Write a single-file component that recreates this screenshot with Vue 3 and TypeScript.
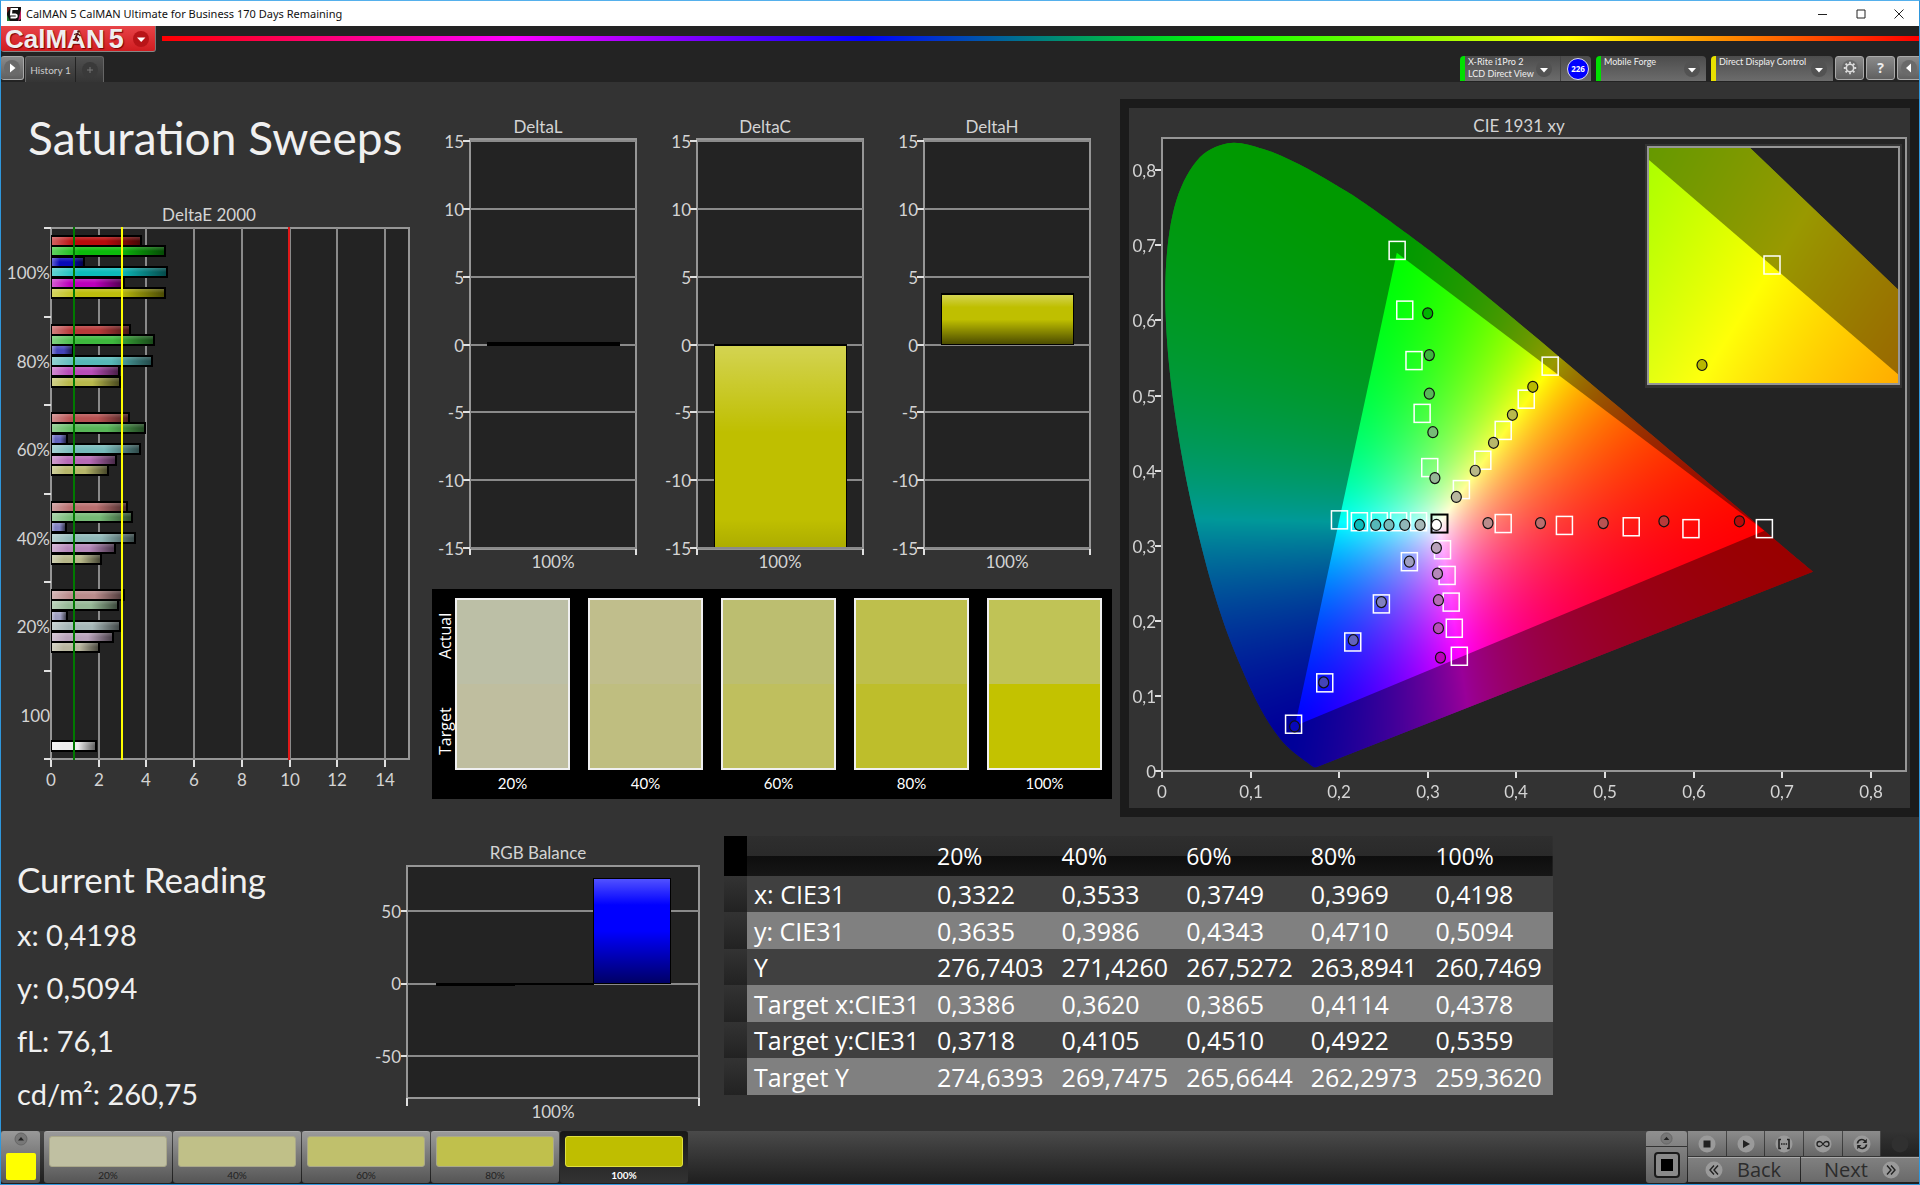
<script setup lang="ts">
import { onMounted, ref } from 'vue'

type Point = [number, number]

interface Marker {
  x: number
  y: number
  fill?: string
}

const levels = ['20%', '40%', '60%', '80%', '100%']

/* ---------- DeltaE 2000 ---------- */
const deStep = 23.87
const deLeft = 50
const deTop = 23
const deBand = 88.5
const deGroups = [
  { label: '100%', values: [3.83, 4.83, 1.42, 4.89, 3.08, 4.83], colors: ['#b80c0c', '#0cba0c', '#0808b8', '#0cbaba', '#bc00bc', '#bcbc0c'] },
  { label: '80%', values: [3.36, 4.37, 0.98, 4.29, 2.9, 2.94], colors: ['#b83a3a', '#3eb83e', '#4444b8', '#56b8b8', '#b84cb8', '#b8b84c'] },
  { label: '60%', values: [3.29, 3.96, 0.73, 3.76, 2.77, 2.44], colors: ['#b85252', '#58b658', '#6262bc', '#76baba', '#b66ab6', '#b6b66a'] },
  { label: '40%', values: [3.23, 3.44, 0.68, 3.58, 2.73, 2.13], colors: ['#b86e6e', '#76ba76', '#8080c0', '#90b8b8', '#b688ba', '#b6b688'] },
  { label: '20%', values: [3.09, 2.83, 0.73, 2.95, 2.65, 2.06], colors: ['#ba8c8c', '#96b896', '#9e9ec0', '#a6b8b8', '#b8a2ba', '#b8b69e'] },
]
const deBars = deGroups.flatMap((g, gi) =>
  g.values.map((v, i) => ({
    y: Math.round(deTop + gi * deBand + 7 + i * 10.4),
    w: Math.round(v * deStep),
    color: g.colors[i],
  })),
)
deBars.push({ y: 535, w: 46, color: '#ececec' })
const deLabels = [...deGroups.map((g) => g.label), '100']
const deTicks = [0, 2, 4, 6, 8, 10, 12, 14]
const deX = (v: number) => Math.round(deLeft + v * deStep)

/* ---------- DeltaL / DeltaC / DeltaH ---------- */
const deltaTicks = [15, 10, 5, 0, -5, -10, -15]
const deltaY = (v: number) => Math.round(229.5 - v * 13.55)
const deltaCharts = [
  { name: 'DeltaL', top: 227, height: 4 },
  { name: 'DeltaC', top: 229, height: 350 },
  { name: 'DeltaH', top: 178, height: 52 },
]

/* ---------- Swatches ---------- */
const swatches = [
  { actual: '#bcbfa6', target: '#bfbe9f' },
  { actual: '#c0be8c', target: '#bfbe80' },
  { actual: '#bcbe70', target: '#bfbf5e' },
  { actual: '#bebf4c', target: '#bebe2b' },
  { actual: '#c0c356', target: '#c3c200' },
]
const steps = ['#c0c0a2', '#c0c088', '#c0c06c', '#c0c04c', '#bfbe00']

/* ---------- Table ---------- */
const rows = [
  { name: 'x: CIE31', values: ['0,3322', '0,3533', '0,3749', '0,3969', '0,4198'] },
  { name: 'y: CIE31', values: ['0,3635', '0,3986', '0,4343', '0,4710', '0,5094'] },
  { name: 'Y', values: ['276,7403', '271,4260', '267,5272', '263,8941', '260,7469'] },
  { name: 'Target x:CIE31', values: ['0,3386', '0,3620', '0,3865', '0,4114', '0,4378'] },
  { name: 'Target y:CIE31', values: ['0,3718', '0,4105', '0,4510', '0,4922', '0,5359'] },
  { name: 'Target Y', values: ['274,6393', '269,7475', '265,6644', '262,2973', '259,3620'] },
]

/* ---------- CIE 1931 ---------- */
const cieX = (v: number) => 33 + v * 886
const cieY = (v: number) => 663 - v * 751
const xTicks = ['0', '0,1', '0,2', '0,3', '0,4', '0,5', '0,6', '0,7', '0,8']

const locus: Point[] = [
  [0.1741, 0.005], [0.1714, 0.0051], [0.1689, 0.0069], [0.1644, 0.0109], [0.1566, 0.0177],
  [0.144, 0.0297], [0.1355, 0.0399], [0.1241, 0.0578], [0.1096, 0.0868], [0.0913, 0.1327],
  [0.0687, 0.2007], [0.0454, 0.295], [0.0235, 0.4127], [0.0082, 0.5384], [0.0039, 0.6548],
  [0.0139, 0.7502], [0.0389, 0.812], [0.0743, 0.8358], [0.1142, 0.8282], [0.1547, 0.8079],
  [0.1929, 0.7826], [0.2296, 0.7553], [0.3016, 0.6933], [0.3731, 0.6255], [0.4441, 0.5557],
  [0.5125, 0.4876], [0.5752, 0.4252], [0.627, 0.3735], [0.6658, 0.3345], [0.6915, 0.3083],
  [0.719, 0.2809], [0.7347, 0.2653],
]
const gamut: Point[] = [[0.68, 0.32], [0.265, 0.69], [0.15, 0.06]]

const targets: Marker[] = [
  [0.2654, 0.6932], [0.274, 0.6137], [0.2844, 0.5465], [0.2936, 0.4762], [0.3022, 0.404],
  [0.4381, 0.5391], [0.4111, 0.4951], [0.3851, 0.4535], [0.3621, 0.4138], [0.3379, 0.3747],
  [0.6799, 0.3227], [0.597, 0.3227], [0.5296, 0.3252], [0.4542, 0.327], [0.3851, 0.3295],
  [0.2003, 0.3344], [0.2228, 0.3319], [0.2453, 0.3319], [0.2671, 0.3319], [0.2896, 0.3319],
  [0.3166, 0.2946], [0.3218, 0.2604], [0.3264, 0.2249], [0.3299, 0.1901], [0.3356, 0.1528],
  [0.2792, 0.2787], [0.2476, 0.2225], [0.2153, 0.1718], [0.1837, 0.1174], [0.1485, 0.0623],
].map(([x, y]) => ({ x, y }))

const series: { color: string[]; points: Point[] }[] = [
  { color: ['#00b400', '#3eb43e', '#58b658', '#76ba76', '#96b896'], points: [[0.2999, 0.6094], [0.3017, 0.5538], [0.3017, 0.5024], [0.3057, 0.4511], [0.308, 0.39]] },
  { color: ['#b8b800', '#b8b84c', '#b8b86a', '#b8b888', '#b8b69e'], points: [[0.4185, 0.5116], [0.3955, 0.4743], [0.3742, 0.437], [0.3535, 0.3998], [0.3322, 0.3649]] },
  { color: ['#b80c0c', '#b83a3a', '#b85252', '#b86e6e', '#ba8c8c'], points: [[0.6517, 0.3325], [0.5665, 0.3325], [0.498, 0.3301], [0.4272, 0.3301], [0.3679, 0.3301]] },
  { color: ['#0cbaba', '#56b8b8', '#76baba', '#90b8b8', '#a6b8b8'], points: [[0.2228, 0.3276], [0.2412, 0.3276], [0.2562, 0.3276], [0.274, 0.3276], [0.2913, 0.3276]] },
  { color: ['#bc00bc', '#b84cb8', '#b66ab6', '#b688ba', '#b8a2ba'], points: [[0.3143, 0.151], [0.312, 0.1901], [0.312, 0.2274], [0.3109, 0.2628], [0.3097, 0.2971]] },
  { color: ['#0808b8', '#4444b8', '#6262bc', '#8080c0', '#9e9ec0'], points: [[0.1497, 0.0593], [0.1825, 0.118], [0.2159, 0.1742], [0.2476, 0.2249], [0.2792, 0.2787]] },
]
const readings: Marker[] = series.flatMap((s) => s.points.map(([x, y], i) => ({ x, y, fill: s.color[i] })))

const diagram = ref<HTMLCanvasElement | null>(null)
const inset = ref<HTMLCanvasElement | null>(null)

function tracePath(ctx: CanvasRenderingContext2D, pts: Point[], smooth: boolean) {
  ctx.beginPath()
  ctx.moveTo(pts[0][0], pts[0][1])
  for (let i = 0; i < pts.length - 1; i++) {
    const p1 = pts[i]
    const p2 = pts[i + 1]
    if (!smooth) {
      ctx.lineTo(p2[0], p2[1])
      continue
    }
    const p0 = pts[Math.max(0, i - 1)]
    const p3 = pts[Math.min(pts.length - 1, i + 2)]
    ctx.bezierCurveTo(
      p1[0] + (p2[0] - p0[0]) / 6, p1[1] + (p2[1] - p0[1]) / 6,
      p2[0] - (p3[0] - p1[0]) / 6, p2[1] - (p3[1] - p1[1]) / 6,
      p2[0], p2[1],
    )
  }
  ctx.closePath()
}

/* Paints the chromaticity colours of one xy window; the area outside the gamut is dimmed. */
function paintChromaticity(canvas: HTMLCanvasElement, x0: number, x1: number, y0: number, y1: number) {
  const w = canvas.width
  const h = canvas.height
  const layer = document.createElement('canvas')
  layer.width = w
  layer.height = h
  const lctx = layer.getContext('2d')
  const ctx = canvas.getContext('2d')
  if (!lctx || !ctx) return
  const img = lctx.createImageData(w, h)
  for (let j = 0; j < h; j++) {
    const y = y1 - ((j + 0.5) / h) * (y1 - y0)
    for (let i = 0; i < w; i++) {
      const x = x0 + ((i + 0.5) / w) * (x1 - x0)
      const z = 1 - x - y
      const r = Math.max(0, 2.4935 * x - 0.9314 * y - 0.4027 * z)
      const g = Math.max(0, -0.8295 * x + 1.7627 * y + 0.0236 * z)
      const b = Math.max(0, 0.0358 * x - 0.0762 * y + 0.9569 * z)
      const m = Math.max(r, g, b, 0.0001)
      const k = (j * w + i) * 4
      img.data[k] = 255 * Math.pow(r / m, 1.2)
      img.data[k + 1] = 255 * Math.pow(g / m, 1.2)
      img.data[k + 2] = 255 * Math.pow(b / m, 1.2)
      img.data[k + 3] = 255
    }
  }
  lctx.putImageData(img, 0, 0)
  const map = ([x, y]: Point): Point => [((x - x0) / (x1 - x0)) * w, ((y1 - y) / (y1 - y0)) * h]
  ctx.save()
  tracePath(ctx, locus.map(map), true)
  ctx.clip()
  ctx.drawImage(layer, 0, 0)
  ctx.fillStyle = 'rgba(0,0,0,0.4)'
  ctx.fillRect(0, 0, w, h)
  tracePath(ctx, gamut.map(map), false)
  ctx.clip()
  ctx.drawImage(layer, 0, 0)
  ctx.restore()
}

onMounted(() => {
  if (diagram.value) paintChromaticity(diagram.value, 0, 744 / 886, 0, 633 / 751)
  if (inset.value) paintChromaticity(inset.value, 0.4059, 0.4703, 0.5046, 0.5676)
})
</script>

<template>
  <div class="window">
    <header class="titlebar">
      <svg class="appicon" viewBox="0 0 14 14" aria-hidden="true">
        <rect width="14" height="14" fill="#111" />
        <path d="M0 0h4L0 6z" fill="#7a2020" />
        <path d="M14 2v10l-3 2z" fill="#c02060" />
        <path d="M0 8l3 6H0z" fill="#207a30" />
        <path d="M11 2H4.500L4 7.500H8.500Q9.800 7.500 9.800 9T8.500 10.600H3.500" fill="none" stroke="#fff" stroke-width="2" />
      </svg>
      <span class="apptitle">CalMAN 5 CalMAN Ultimate for Business 170 Days Remaining</span>
      <div class="winbtns">
        <button type="button" aria-label="Minimize"><svg viewBox="0 0 10 10"><path d="M0 5.500h9" /></svg></button>
        <button type="button" aria-label="Maximize"><svg viewBox="0 0 10 10"><path d="M1 1h8v8H1z" /></svg></button>
        <button type="button" aria-label="Close"><svg viewBox="0 0 10 10"><path d="M.5.5l9 9M9.500.5l-9 9" /></svg></button>
      </div>
    </header>

    <div class="chrome">
      <div class="brandrow">
        <button type="button" class="logo">
          <span class="brand">CalMAN</span><span class="five">5</span>
          <svg class="runner" viewBox="0 0 10 12" aria-hidden="true">
            <circle cx="6.500" cy="1.500" r="1.300" />
            <path d="M6 3L4 7l2.500 2L5 11.500M4 7l-1 2.500L.8 10M2 4.500L5.500 3.500 8.500 6" />
          </svg>
          <svg class="drop" viewBox="0 0 18 18" aria-hidden="true">
            <circle cx="9" cy="9" r="8" fill="#b81418" />
            <path d="M5 7.500h8.400L9.200 12z" fill="#fff" />
          </svg>
        </button>
        <div class="rainbow"></div>
      </div>
      <div class="tabrow">
        <button type="button" class="key expand" aria-label="Expand">
          <svg viewBox="0 0 18 18"><circle cx="9" cy="9" r="8" /><path d="M7 4.500v9l5.500-4.500z" fill="#fff" /></svg>
        </button>
        <nav class="tabs">
          <button type="button" class="tab">History 1</button>
          <button type="button" class="tab plus" aria-label="Add tab">
            <svg viewBox="0 0 18 18"><circle cx="9" cy="9" r="8" fill="#3a3a3a" /><path d="M6 9h6M9 6v6" stroke="#777" /></svg>
          </button>
        </nav>
        <div class="devices">
          <div class="device meter">
            <button type="button" class="pick">
              <span>X-Rite i1Pro 2<br />LCD Direct View</span>
              <svg viewBox="0 0 18 18"><circle cx="9" cy="9" r="8" /><path d="M5 8h8l-4 4.500z" fill="#fff" /></svg>
            </button>
            <span class="count">226</span>
          </div>
          <div class="device source">
            <button type="button" class="pick">
              <span>Mobile Forge</span>
              <svg viewBox="0 0 18 18"><circle cx="9" cy="9" r="8" /><path d="M5 8h8l-4 4.500z" fill="#fff" /></svg>
            </button>
          </div>
          <div class="device display">
            <button type="button" class="pick">
              <span>Direct Display Control</span>
              <svg viewBox="0 0 18 18"><circle cx="9" cy="9" r="8" /><path d="M5 8h8l-4 4.500z" fill="#fff" /></svg>
            </button>
          </div>
          <button type="button" class="key" aria-label="Settings">
            <svg viewBox="0 0 18 18">
              <circle cx="9" cy="9" r="8" />
              <circle cx="9" cy="9" r="3.700" fill="none" stroke="#ddd" stroke-width="1.600" />
              <path d="M9 2.800v2M9 13.200v2M2.800 9h2M13.200 9h2M4.600 4.600L6 6M12 12l1.400 1.400M4.600 13.400L6 12M12 6l1.400-1.400" stroke="#ddd" stroke-width="1.800" />
            </svg>
          </button>
          <button type="button" class="key help" aria-label="Help"><span>?</span></button>
          <button type="button" class="key cut" aria-label="Collapse">
            <svg viewBox="0 0 18 18"><circle cx="9" cy="9" r="8" /><path d="M11 4.500v9L6 9z" fill="#fff" /></svg>
          </button>
        </div>
      </div>
    </div>

    <main class="workspace">
      <section class="upper">
        <div class="left">
          <h1>Saturation Sweeps</h1>
          <svg class="chart" viewBox="0 0 423 595" role="img" aria-label="DeltaE 2000">
            <defs>
              <linearGradient id="shadeH">
                <stop offset="0" stop-color="#fff" stop-opacity=".35" />
                <stop offset=".25" stop-color="#fff" stop-opacity="0" />
                <stop offset=".6" stop-color="#000" stop-opacity="0" />
                <stop offset="1" stop-color="#000" stop-opacity=".6" />
              </linearGradient>
              <linearGradient id="gloss" x2="0" y2="1">
                <stop offset="0" stop-color="#fff" stop-opacity=".18" />
                <stop offset=".5" stop-color="#fff" stop-opacity="0" />
              </linearGradient>
              <linearGradient id="shadeV" x2="0" y2="1">
                <stop offset="0" stop-color="#fff" stop-opacity=".32" />
                <stop offset=".25" stop-color="#fff" stop-opacity="0" />
                <stop offset=".5" stop-color="#000" stop-opacity="0" />
                <stop offset="1" stop-color="#000" stop-opacity=".6" />
              </linearGradient>
            </defs>
            <text x="208" y="16" text-anchor="middle">DeltaE 2000</text>
            <rect x="50" y="23" width="358" height="531" class="plot" />
            <g class="grid">
              <path v-for="t in deTicks.slice(1)" :key="t" :d="`M${deX(t)} 23V554`" />
            </g>
            <g v-for="(b, i) in deBars" :key="i">
              <rect :x="deLeft" :y="b.y" :width="b.w" height="12" fill="#000" />
              <rect :x="deLeft + 1" :y="b.y + 2" :width="b.w - 3" height="8" :fill="b.color" />
              <rect :x="deLeft + 1" :y="b.y + 2" :width="b.w - 3" height="8" fill="url(#shadeH)" />
              <rect :x="deLeft + 1" :y="b.y + 2" :width="b.w - 3" height="8" fill="url(#gloss)" />
            </g>
            <g class="ticks">
              <path v-for="n in 7" :key="n" :d="`M43 ${Math.round(deTop + (n - 1) * deBand)}H50`" />
              <path v-for="t in deTicks" :key="t" :d="`M${deX(t)} 555v7`" />
            </g>
            <g class="limits">
              <path d="M73 22V555" stroke="#007a00" />
              <path d="M121 22V555" stroke="#ffff00" />
              <path d="M288 22V555" stroke="#e01818" />
            </g>
            <text v-for="(l, i) in deLabels" :key="i" x="49" :y="74 + i * 88.500" text-anchor="end">{{ l }}</text>
            <text v-for="t in deTicks" :key="t" :x="deX(t)" y="581" text-anchor="middle">{{ t }}</text>
          </svg>
        </div>

        <div class="middle">
          <div class="deltas">
            <svg v-for="c in deltaCharts" :key="c.name" class="chart" viewBox="0 0 227 460" role="img" :aria-label="c.name">
              <defs>
                <clipPath :id="'area' + c.name"><rect x="46" y="24" width="166" height="410" /></clipPath>
              </defs>
              <text x="114" y="18" text-anchor="middle">{{ c.name }}</text>
              <rect x="46" y="24" width="166" height="410" class="plot" />
              <g class="grid">
                <path v-for="t in deltaTicks" :key="t" :d="`M46 ${deltaY(t)}H212`" />
              </g>
              <g :clip-path="`url(#area${c.name})`">
                <rect x="63" :y="c.top" width="133" :height="c.height" fill="#000" />
                <template v-if="c.height > 4">
                  <rect x="64" :y="c.top + 2" width="131" :height="c.height - 3" fill="#bfbf00" />
                  <rect x="64" :y="c.top + 2" width="131" :height="c.height - 3" fill="url(#shadeV)" />
                </template>
              </g>
              <path class="grid" d="M46 433H212" />
              <g class="ticks">
                <path v-for="t in deltaTicks" :key="t" :d="`M39 ${deltaY(t)}H46`" />
                <path d="M46 434v6M212 434v6" />
              </g>
              <text v-for="t in deltaTicks" :key="t" x="40" :y="deltaY(t) + 7" text-anchor="end">{{ t }}</text>
              <text x="129" y="453" text-anchor="middle">100%</text>
            </svg>
          </div>
          <div class="compare">
            <div class="sides"><span>Actual</span><span>Target</span></div>
            <figure v-for="(s, i) in swatches" :key="i">
              <div class="pair">
                <i :style="{ background: s.actual }"></i>
                <i :style="{ background: s.target }"></i>
              </div>
              <figcaption>{{ levels[i] }}</figcaption>
            </figure>
          </div>
        </div>

        <div class="cie">
          <svg class="chart" viewBox="0 0 781 700" role="img" aria-label="CIE 1931 xy">
            <text x="390" y="24" text-anchor="middle">CIE 1931 xy</text>
            <rect x="33" y="30" width="744" height="633" class="plot" />
            <foreignObject x="33" y="30" width="744" height="633">
              <canvas ref="diagram" width="744" height="633"></canvas>
            </foreignObject>
            <rect x="33" y="30" width="744" height="633" class="frame" />
            <g class="ticks">
              <path v-for="(t, i) in xTicks" :key="t" :d="`M${Math.round(cieX(i / 10))} 664v6`" />
              <path v-for="(t, i) in xTicks" :key="t + 'y'" :d="`M26 ${Math.round(cieY(i / 10))}h6`" />
            </g>
            <text v-for="(t, i) in xTicks" :key="t" :x="Math.round(cieX(i / 10))" y="690" text-anchor="middle">{{ t }}</text>
            <text v-for="(t, i) in xTicks" :key="t + 'y'" x="27" :y="Math.round(cieY(i / 10)) + 7" text-anchor="end">{{ t }}</text>
            <g fill="none" stroke="#fff" stroke-width="1.500">
              <rect v-for="(m, i) in targets" :key="i" :x="cieX(m.x) - 8" :y="cieY(m.y) - 9" width="16" height="18" />
            </g>
            <rect :x="cieX(0.3132) - 8" :y="cieY(0.3295) - 9" width="16" height="18" fill="none" stroke="#000" stroke-width="2" />
            <g stroke="#111" stroke-width="1.200">
              <ellipse v-for="(m, i) in readings" :key="i" :cx="cieX(m.x)" :cy="cieY(m.y)" rx="5" ry="5.500" :fill="m.fill" />
              <ellipse :cx="cieX(0.3097)" :cy="cieY(0.3276)" rx="5" ry="5.500" fill="#fff" />
            </g>
            <rect x="516" y="36" width="257" height="244" fill="#333" />
            <rect x="519" y="39" width="251" height="237" class="plot" />
            <foreignObject x="520" y="40" width="249" height="235">
              <canvas ref="inset" width="249" height="235"></canvas>
            </foreignObject>
            <rect x="519" y="39" width="251" height="237" class="frame" />
            <rect x="635" y="148" width="16" height="18" fill="none" stroke="#fff" stroke-width="1.500" />
            <ellipse cx="573" cy="257" rx="5" ry="5.500" fill="#b8b800" stroke="#111" stroke-width="1.200" />
          </svg>
        </div>
      </section>

      <section class="lower">
        <div class="reading">
          <h2>Current Reading</h2>
          <p>x: 0,4198</p>
          <p>y: 0,5094</p>
          <p>fL: 76,1</p>
          <p>cd/m²: 260,75</p>
        </div>
        <svg class="chart" viewBox="0 0 333 288" role="img" aria-label="RGB Balance">
          <text x="167" y="19" text-anchor="middle">RGB Balance</text>
          <rect x="36" y="26" width="292" height="232" class="plot" />
          <g class="grid"><path d="M36 71H328M36 144H328M36 216H328" /></g>
          <rect x="65" y="143" width="79" height="3" fill="#000" />
          <rect x="143" y="143" width="80" height="2" fill="#000" />
          <rect x="222" y="38" width="78" height="106" fill="#000" />
          <rect x="223" y="39" width="76" height="104" fill="#00f" />
          <rect x="223" y="39" width="76" height="104" fill="url(#shadeV)" />
          <g class="ticks"><path d="M30 71h6M30 144h6M30 216h6M36 258v8M328 258v8" /></g>
          <text x="30" y="78" text-anchor="end">50</text>
          <text x="30" y="150" text-anchor="end">0</text>
          <text x="30" y="223" text-anchor="end">-50</text>
          <text x="182" y="278" text-anchor="middle">100%</text>
        </svg>
        <div class="tablewrap">
          <table>
            <colgroup><col class="csel" /><col class="cname" /><col v-for="l in levels" :key="l" /></colgroup>
            <thead>
              <tr><td class="sel"></td><td></td><th v-for="l in levels" :key="l" scope="col">{{ l }}</th></tr>
            </thead>
            <tbody>
              <tr v-for="r in rows" :key="r.name">
                <td class="sel"></td>
                <th scope="row">{{ r.name }}</th>
                <td v-for="(v, i) in r.values" :key="i">{{ v }}</td>
              </tr>
            </tbody>
          </table>
        </div>
      </section>
    </main>

    <footer class="bottombar">
      <button type="button" class="patch" aria-label="Pattern colour">
        <svg viewBox="0 0 14 14"><circle cx="7" cy="7" r="6" fill="#777" stroke="#666" /><path d="M4 8.500h6L7 5z" fill="#222" /></svg>
        <i></i>
      </button>
      <div class="steps">
        <button v-for="(c, i) in steps" :key="i" type="button" class="step" :class="{ active: i === 4 }">
          <i :style="{ background: c }"></i>
          <span>{{ levels[i] }}</span>
        </button>
      </div>
      <div class="transport">
        <div class="single">
          <button type="button" aria-label="More">
            <svg viewBox="0 0 14 14"><circle cx="7" cy="7" r="6" fill="#777" stroke="#666" /><path d="M4 8.500h6L7 5z" fill="#222" /></svg>
          </button>
          <button type="button" class="big" aria-label="Read single">
            <svg viewBox="0 0 26 26"><rect x="1" y="1" width="24" height="24" rx="3" fill="#8a8a8a" stroke="#1a1a1a" stroke-width="2" /><rect x="7" y="7" width="12" height="12" fill="#000" /></svg>
          </button>
        </div>
        <div class="keys">
          <div class="small">
            <button type="button" aria-label="Stop"><svg viewBox="0 0 18 18"><circle cx="9" cy="9" r="8.500" /><path d="M5.500 5.500h7v7h-7z" fill="#222" /></svg></button>
            <button type="button" aria-label="Play"><svg viewBox="0 0 18 18"><circle cx="9" cy="9" r="8.500" /><path d="M6 5v8l7-4z" fill="#222" /></svg></button>
            <button type="button" aria-label="Read range"><svg viewBox="0 0 18 18"><circle cx="9" cy="9" r="8.500" /><path d="M6 4.500H4v9h2M12 4.500h2v9h-2" fill="none" stroke="#222" stroke-width="1.600" /><path d="M6 9h1.500M8.300 9h1.500M10.600 9h1.500" stroke="#222" stroke-width="1.600" /></svg></button>
            <button type="button" aria-label="Loop"><svg viewBox="0 0 18 18"><circle cx="9" cy="9" r="8.500" /><path d="M9 9C7.500 6.800 6.500 6.500 5.500 6.500a2.500 2.500 0 0 0 0 5C6.500 11.500 7.500 11.200 9 9s2.500-2.500 3.500-2.500a2.500 2.500 0 0 1 0 5C11.500 11.500 10.500 11.200 9 9z" fill="none" stroke="#222" stroke-width="1.300" /></svg></button>
            <button type="button" aria-label="Refresh"><svg viewBox="0 0 18 18"><circle cx="9" cy="9" r="8.500" /><path d="M4.500 8.500A4.300 4.300 0 0 1 12 6M13.500 9.500A4.300 4.300 0 0 1 6 12" fill="none" stroke="#222" stroke-width="1.700" /><path d="M13.800 3.800v4.200H9.600zM4.200 14.200V10h4.200z" fill="#222" /></svg></button>
            <button type="button" class="off" aria-label="Record" disabled><svg viewBox="0 0 18 18"><circle cx="9" cy="9" r="8.500" /></svg></button>
          </div>
          <div class="nav">
            <button type="button" class="back"><svg viewBox="0 0 18 18"><circle cx="9" cy="9" r="8.500" /><path d="M9 4.500L5 9l4 4.500M13 4.500L9 9l4 4.500" fill="none" stroke="#222" stroke-width="1.400" /></svg>Back</button>
            <button type="button" class="next">Next<svg viewBox="0 0 18 18"><circle cx="9" cy="9" r="8.500" /><path d="M5 4.500L9 9l-4 4.500M9 4.500L13 9l-4 4.500" fill="none" stroke="#222" stroke-width="1.400" /></svg></button>
          </div>
        </div>
      </div>
    </footer>
  </div>
</template>

<style>
body {
  margin: 0;
  background: #333;
}
</style>

<style scoped>
* {
  box-sizing: border-box;
}
button {
  margin: 0;
  padding: 0;
  border: 0;
  background: none;
  color: inherit;
  font: inherit;
}
.window {
  display: flex;
  flex-direction: column;
  min-height: 100vh;
  border: 1px solid #2f97dc;
  border-top-color: #55b0ec;
  background: #333;
  color: #eee;
  font-family: Lato, "Open Sans", sans-serif;
}

/* title bar */
.titlebar {
  display: flex;
  align-items: center;
  height: 25px;
  padding: 0 1px 0 6px;
  background: #fff;
  color: #111;
}
.appicon {
  width: 14px;
  height: 14px;
}
.apptitle {
  margin-left: 5px;
  font: 11px/16px "Noto Sans", "Open Sans", sans-serif;
}
.winbtns {
  display: flex;
  margin-left: auto;
}
.winbtns button {
  width: 38px;
  height: 24px;
}
.winbtns svg {
  display: block;
  width: 10px;
  height: 10px;
  margin: 0 auto;
  fill: none;
  stroke: #222;
}

/* application header */
.chrome {
  background: #232323;
}
.brandrow {
  display: flex;
  height: 30px;
}
.logo {
  position: relative;
  display: flex;
  align-items: center;
  width: 155px;
  height: 26px;
  padding-left: 4px;
  border-bottom: 1px solid #888;
  border-right: 1px solid #777;
  border-radius: 0 0 3px 3px;
  background: linear-gradient(#e84448, #d01c20);
  color: #eee;
  font: bold 26px/22px "Liberation Sans", sans-serif;
  text-shadow: 1px 1px 1px #700;
}
.five {
  margin-left: 4px;
  font-size: 27px;
}
.runner {
  position: absolute;
  left: 71px;
  top: 4px;
  width: 10px;
  height: 12px;
  fill: #501010;
}
.runner path {
  fill: none;
  stroke: #501010;
  stroke-width: 1.300;
}
.drop {
  width: 18px;
  height: 18px;
  margin-left: auto;
  margin-right: 5px;
}
.rainbow {
  flex: 1;
  height: 5px;
  margin: 10px 0 0 6px;
  background: linear-gradient(90deg, #f00, #f0f, #00f, #0f0, #ff0, #f00);
}
.tabrow {
  display: flex;
  height: 26px;
}
.key {
  display: flex;
  align-items: center;
  justify-content: center;
  width: 29px;
  height: 24px;
  border: 1px solid #aaa;
  border-radius: 3px;
  background: linear-gradient(#8a8a8a, #606060);
}
.key svg,
.pick svg,
.plus svg {
  width: 18px;
  height: 18px;
  fill: #6a6a6a;
}
.expand {
  width: 23px;
  border-left: 0;
}
.tabs {
  display: flex;
  margin-left: 1px;
  border: 1px solid #666;
  border-bottom: 0;
  border-radius: 3px 3px 0 0;
  background: linear-gradient(#505050, #353535);
}
.tab {
  display: flex;
  align-items: center;
  justify-content: center;
  width: 49px;
  color: #ccc;
  font-size: 10px;
}
.plus {
  width: 28px;
  border-left: 1px solid #222;
}
.devices {
  display: flex;
  margin-left: auto;
}
.device {
  display: flex;
  align-items: center;
  height: 25px;
  margin-right: 5px;
  border-left: 5px solid #00e000;
  border-radius: 4px 4px 0 0;
  background: linear-gradient(#4c4c4c, #6c6c6c);
}
.pick {
  display: flex;
  flex: 1;
  align-items: center;
  justify-content: space-between;
  height: 25px;
  padding: 0 5px 0 3px;
  color: #f0f0f0;
  font-size: 9px;
  line-height: 12px;
  text-align: left;
  white-space: nowrap;
}
.pick span {
  align-self: flex-start;
  margin-right: -10px;
  z-index: 1;
}
.pick svg {
  fill: #525252;
}
.meter {
  width: 131px;
}
.meter .pick {
  border-right: 1px solid #444;
  padding-right: 7px;
}
.source {
  width: 110px;
}
.display {
  width: 122px;
  margin-right: 2px;
  border-left-color: #e8e000;
}
.count {
  width: 22px;
  height: 22px;
  margin: 0 2px 0 6px;
  border: 1px solid #dde;
  border-radius: 50%;
  background: #00f;
  color: #fff;
  font: bold 8px/20px "Open Sans", sans-serif;
  text-align: center;
}
.key + .key {
  margin-left: 2px;
}
.help {
  font: bold 14px/18px "Open Sans", sans-serif;
}
.cut {
  width: 22px;
  border-right: 0;
  border-radius: 3px 0 0 3px;
}

/* workspace */
.workspace {
  flex: 1;
}
.upper {
  display: grid;
  grid-template-columns: minmax(0, 423fr) minmax(0, 696fr) minmax(0, 799fr);
  align-items: start;
}
h1 {
  margin: 26px 0 0 27px;
  color: #f0f0f0;
  font-size: 46px;
  font-weight: 400;
  line-height: 60px;
  white-space: nowrap;
}
.left .chart {
  margin-top: 37px;
}
.chart {
  display: block;
  width: 100%;
  height: auto;
  font-size: 17px;
  fill: #d4d4d4;
}
.plot {
  fill: #232323;
  stroke: #969696;
  stroke-width: 2;
}
.frame {
  fill: none;
  stroke: #969696;
  stroke-width: 2;
}
.grid,
.grid path {
  fill: none;
  stroke: #8a8a8a;
  stroke-width: 2;
}
.ticks path {
  fill: none;
  stroke: #e0e0e0;
  stroke-width: 2;
}
.limits path {
  stroke-width: 2;
}
canvas {
  display: block;
  width: 100%;
  height: 100%;
}
.middle {
  padding-top: 33px;
}
.deltas {
  display: flex;
  padding-right: 15px;
}
.deltas .chart {
  flex: 1;
  min-width: 0;
}
.compare {
  display: flex;
  gap: 18px;
  margin: 14px 8px 0;
  padding: 9px 10px 5px 5px;
  background: #000;
  color: #fff;
}
.compare figure {
  flex: 1;
  margin: 0;
  text-align: center;
}
.sides {
  display: flex;
  flex-direction: row-reverse;
  justify-content: space-between;
  width: 18px;
  height: 172px;
  margin-right: -18px;
  padding: 15px 0;
  writing-mode: vertical-rl;
  transform: rotate(180deg);
  font: 16px/16px "Open Sans", sans-serif;
}
.pair {
  display: flex;
  flex-direction: column;
  height: 172px;
  border: 2px solid #f0f0f0;
}
.pair i {
  flex: 1;
}
figcaption {
  padding-top: 3px;
  font-size: 15px;
  line-height: 21px;
}
.cie {
  margin-top: 17px;
  padding: 9px;
  background: #1b1b1b;
}
.cie .chart {
  background: #333;
}

.lower {
  display: grid;
  grid-template-columns: minmax(0, 370fr) minmax(0, 333fr) minmax(0, 849fr) minmax(0, 366fr);
  align-items: start;
  padding-top: 19px;
}
.reading {
  padding: 19px 0 0 16px;
  color: #f0f0f0;
  white-space: nowrap;
}
.reading h2 {
  margin: 0 0 5px;
  font-size: 35px;
  font-weight: 400;
  line-height: 48px;
}
.reading p {
  margin: 0;
  font-size: 29px;
  line-height: 53px;
}
.lower > .chart {
  margin-top: 4px;
}
.tablewrap {
  padding-left: 20px;
}
table {
  width: 100%;
  table-layout: fixed;
  border-collapse: collapse;
  color: #fff;
  font: 25px/34px "Open Sans", sans-serif;
}
.csel {
  width: 23px;
}
.cname {
  width: 183px;
}
th,
td {
  padding: 0 0 0 7px;
  font-weight: 400;
  text-align: left;
  white-space: nowrap;
}
thead tr {
  height: 40px;
  background: linear-gradient(#2e2e2e, #2a2a2a 50%, #0e0e0e 50%, #161616);
}
thead th {
  font-size: 23px;
}
thead .sel {
  background: #000;
}
tbody tr {
  height: 36px;
  background: #404040;
}
tbody tr:nth-child(even) {
  height: 37px;
  background: #808080;
}
tbody .sel {
  background: linear-gradient(#333, #222);
}

/* bottom bar */
.bottombar {
  display: flex;
  height: 53px;
  background: linear-gradient(#4a4a4a, #1e1e1e);
}
.patch {
  display: flex;
  flex-direction: column;
  align-items: center;
  justify-content: space-between;
  width: 39px;
  margin: 0 4px 1px 0;
  padding: 1px 0 3px;
  border-radius: 3px;
  background: linear-gradient(#999, #555);
}
.patch svg {
  width: 14px;
  height: 14px;
}
.patch i {
  width: 30px;
  height: 27px;
  border-radius: 2px;
  background: #ff0;
}
.steps {
  display: flex;
}
.step {
  width: 128px;
  margin: 0 1px 1px 0;
  padding: 4px 5px 5px;
  border-top: 1px solid #aaa;
  border-radius: 3px;
  background: linear-gradient(#9a9a9a, #555);
  color: #222;
  font-size: 10px;
  line-height: 16px;
}
.step i {
  display: block;
  height: 31px;
  border: 1px solid #aaa88a;
  border-radius: 3px;
}
.step span {
  display: block;
}
.step.active {
  border-top-color: #1a1a1a;
  background: linear-gradient(#181818, #333);
  color: #fff;
  font-weight: 700;
}
.step.active i {
  border-color: #e0e040;
}
.transport {
  display: flex;
  margin-left: auto;
}
.single {
  display: flex;
  flex-direction: column;
  width: 41px;
  margin: 0 1px 1px 0;
  border-radius: 3px;
  background: linear-gradient(#909090, #606060);
}
.single button {
  display: flex;
  align-items: center;
  justify-content: center;
  height: 16px;
  border-bottom: 1px solid #333;
}
.single svg {
  width: 13px;
  height: 13px;
}
.single .big {
  flex: 1;
  border: 0;
}
.single .big svg {
  width: 26px;
  height: 26px;
}
.keys {
  width: 231px;
}
.small,
.nav {
  display: flex;
  gap: 1px;
  height: 26px;
}
.small button,
.nav button {
  display: flex;
  flex: 1;
  align-items: center;
  justify-content: center;
  height: 25px;
  background: linear-gradient(#8c8c8c, #666);
}
.small svg,
.nav svg {
  width: 18px;
  height: 18px;
  fill: #9a9a9a;
}
.small .off {
  background: linear-gradient(#333, #222);
}
.off svg {
  fill: #303030;
}
.nav button {
  justify-content: flex-start;
  gap: 14px;
  border-top: 1px solid #aaa;
  background: linear-gradient(#808080, #6a6a6a);
  color: #2c2c2c;
  font: 20px/24px "Open Sans", sans-serif;
}
.nav .back {
  padding-left: 17px;
}
.nav .next {
  padding-left: 23px;
}
</style>
